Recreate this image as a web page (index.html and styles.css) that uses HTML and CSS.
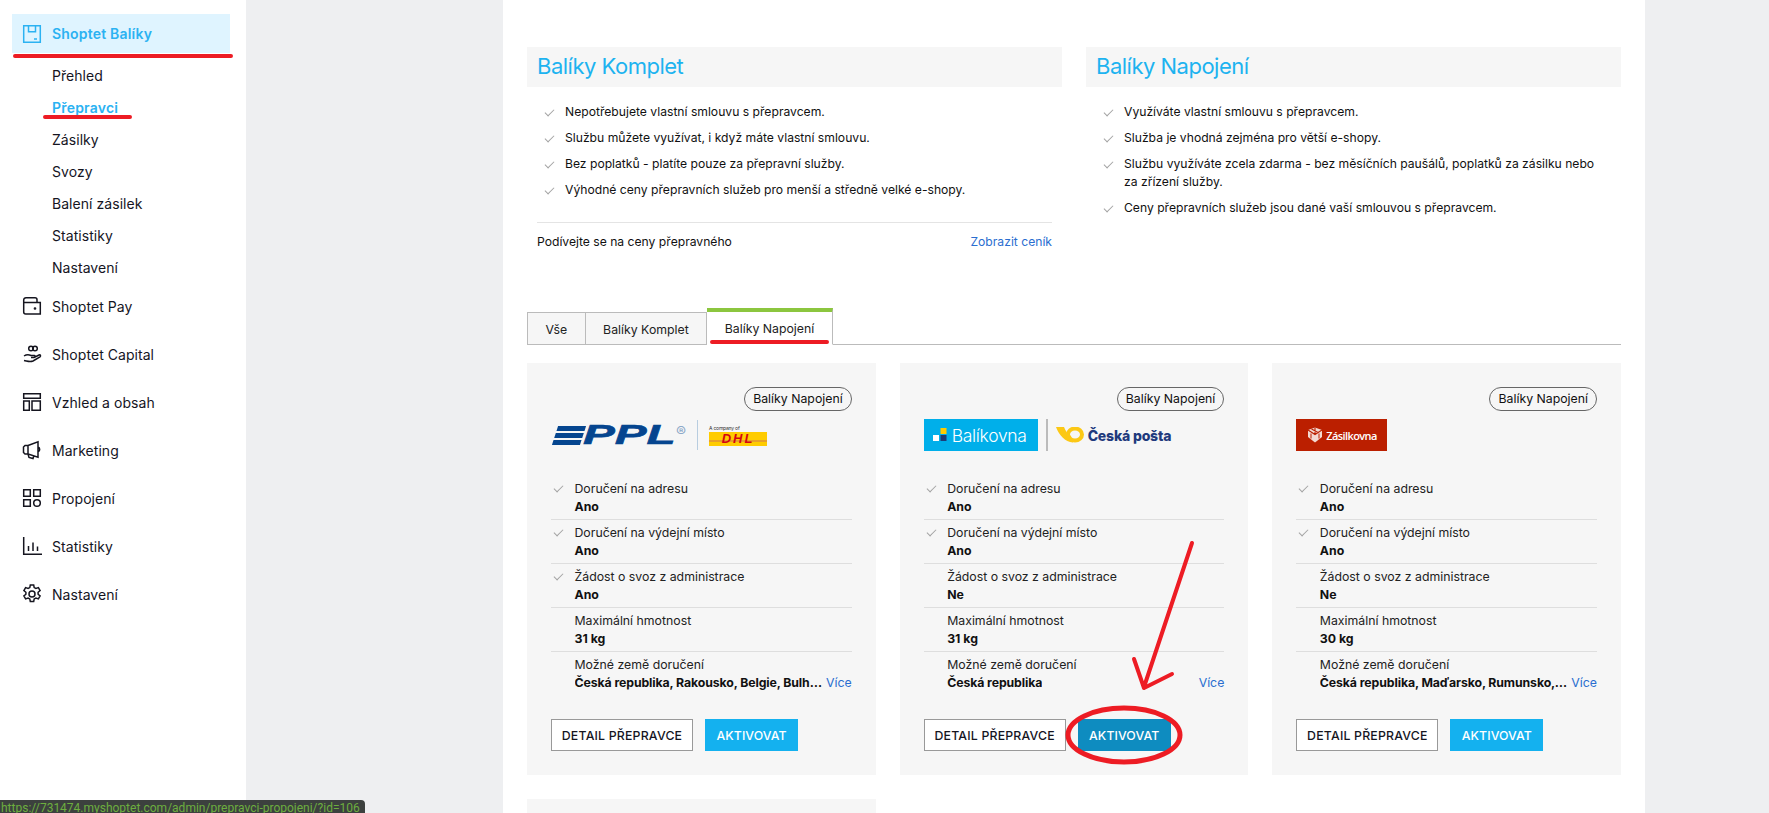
FILE: index.html
```html
<!DOCTYPE html>
<html>
  <head>
    <meta charset="utf-8" />
    <link rel="stylesheet" href="styles.css">
  </head>
  <body>
    <div class="page">
      <aside class="sidebar">
        <div class="nav-active">
          <svg class="nav-icon" viewBox="0 0 18 18"><path d="M.7.7h16.6v16.6H.7zM5.5.7v6h7v-6M11 14h3"/></svg>
          <span>Shoptet Balíky</span>
        </div>
        <ul class="subnav">
          <li>Přehled</li>
          <li class="current">Přepravci</li>
          <li>Zásilky</li>
          <li>Svozy</li>
          <li>Balení zásilek</li>
          <li>Statistiky</li>
          <li>Nastavení</li>
        </ul>
        <ul class="nav">
          <li>
            <svg class="nav-icon" viewBox="0 0 18 18"><path d="M.7 5.500v9.500a2 2 0 0 0 2 2h14.600V5.500zM.7 5.500V3a2.300 2.300 0 0 1 2.300-2.300h9a2 2 0 0 1 2 2v2.800"/><circle cx="12" cy="11.500" r=".6"/></svg>
            <span>Shoptet Pay</span>
          </li>
          <li>
            <svg class="nav-icon" viewBox="0 0 18 18"><circle cx="8" cy="3.500" r="2.300"/><circle cx="12" cy="3.500" r="2.300"/><path d="M1 11c3-2 5-1.500 7-.5h3.500c1 0 1 2-.5 2H8M11 12.500l5-2.500c1.500-.5 2 1 1 1.800L10 16c-3 1.300-5 .3-9-.5"/></svg>
            <span>Shoptet Capital</span>
          </li>
          <li>
            <svg class="nav-icon" viewBox="0 0 18 18"><path d="M.7.7h16.600v4.600H.7zM.7 8h5.600v9.300H.7zM9 8h8.300v9.300H9z"/></svg>
            <span>Vzhled a obsah</span>
          </li>
          <li>
            <svg class="nav-icon" viewBox="0 0 18 18"><path d="M5 4.500 15 .8v15.500L5 13zM5 4.500H2L.5 6v5.500L2 13h3M15 6c2 .5 2.500 4 0 5M5 13l1 3.500 4 1 1-3"/></svg>
            <span>Marketing</span>
          </li>
          <li>
            <svg class="nav-icon" viewBox="0 0 18 18"><path d="M.7.7h6.600v6.600H.7zM10.700.7h6.600v6.600h-6.600zM.7 10.700h6.600v6.600H.7z"/><circle cx="14" cy="14" r="3.300"/></svg>
            <span>Propojení</span>
          </li>
          <li>
            <svg class="nav-icon" viewBox="0 0 18 18"><path d="M.7 0v17.300H19M5.500 9v5M10 5.500V14M14.500 9.500V14"/></svg>
            <span>Statistiky</span>
          </li>
          <li>
            <svg class="nav-icon" viewBox="1 1 18 18"><path d="M8.300 1h3.400l.5 2.600 1.700.9 2.500-.9 1.700 3-2 1.700v1.900l2 1.700-1.700 3-2.500-.9-1.700.9-.5 2.600H8.300l-.5-2.600-1.700-.9-2.500.9-1.700-3 2-1.700V8.300l-2-1.700 1.700-3 2.500.9 1.700-.9z"/><circle cx="10" cy="10" r="3"/></svg>
            <span>Nastavení</span>
          </li>
        </ul>
      </aside>

      <main class="panel">
        <div class="intro">
          <section class="intro-col">
            <h2>Balíky Komplet</h2>
            <ul class="checks">
              <li>Nepotřebujete vlastní smlouvu s přepravcem.</li>
              <li>Službu můžete využívat, i když máte vlastní smlouvu.</li>
              <li>Bez poplatků - platíte pouze za přepravní služby.</li>
              <li>Výhodné ceny přepravních služeb pro menší a středně velké e-shopy.</li>
            </ul>
            <div class="pricing">
              <span>Podívejte se na ceny přepravného</span>
              <a>Zobrazit ceník</a>
            </div>
          </section>
          <section class="intro-col">
            <h2>Balíky Napojení</h2>
            <ul class="checks">
              <li>Využíváte vlastní smlouvu s přepravcem.</li>
              <li>Služba je vhodná zejména pro větší e-shopy.</li>
              <li>Službu využíváte zcela zdarma - bez měsíčních paušálů, poplatků za zásilku nebo za zřízení služby.</li>
              <li>Ceny přepravních služeb jsou dané vaší smlouvou s přepravcem.</li>
            </ul>
          </section>
        </div>

        <div class="tabs">
          <div class="tab">Vše</div>
          <div class="tab">Balíky Komplet</div>
          <div class="tab tab-active">Balíky Napojení</div>
        </div>

        <div class="cards">
          <article class="card">
            <div class="pill-row"><span class="pill">Balíky Napojení</span></div>
            <div class="logo-row">
              <div class="ppl">
                <span class="ppl-bars"><i></i><i></i><i></i></span>
                <span class="ppl-name">PPL</span>
                <span class="ppl-reg">®</span>
              </div>
              <span class="ppl-sep"></span>
              <div class="dhl">
                <span class="dhl-note">A company of</span>
                <span class="dhl-box">DHL</span>
              </div>
            </div>
            <div class="row row-check"><div>Doručení na adresu</div><b>Ano</b></div>
            <div class="row row-check"><div>Doručení na výdejní místo</div><b>Ano</b></div>
            <div class="row row-check"><div>Žádost o svoz z administrace</div><b>Ano</b></div>
            <div class="row"><div>Maximální hmotnost</div><b>31 kg</b></div>
            <div class="row row-last">
              <div>Možné země doručení</div>
              <div class="countries"><b>Česká republika, Rakousko, Belgie, Bulharsko, Dánsko</b><a>Více</a></div>
            </div>
            <div class="actions">
              <button class="btn btn-outline">DETAIL PŘEPRAVCE</button>
              <button class="btn btn-primary">AKTIVOVAT</button>
            </div>
          </article>

          <article class="card">
            <div class="pill-row"><span class="pill">Balíky Napojení</span></div>
            <div class="logo-row">
              <div class="balikovna">
                <svg class="balikovna-mark" viewBox="0 0 14 14"><rect x="7.500" y="0" width="6" height="6" fill="#ffcc00"/><rect x="7.500" y="7" width="6" height="6" fill="#1d3c78"/><rect x="0" y="7" width="6" height="6" fill="#fff"/></svg>
                <span>Balíkovna</span>
              </div>
              <span class="posta-sep"></span>
              <svg class="posta-horn" viewBox="0 0 28 16"><path d="M0 0h8c1.500 4 3.500 7 7 9l2 6.500C9 15 3 8 0 0z" fill="#fcc815"/><ellipse cx="19" cy="7.500" rx="7" ry="6" fill="none" stroke="#fcc815" stroke-width="4"/></svg>
              <span class="posta-name">Česká pošta</span>
            </div>
            <div class="row row-check"><div>Doručení na adresu</div><b>Ano</b></div>
            <div class="row row-check"><div>Doručení na výdejní místo</div><b>Ano</b></div>
            <div class="row"><div>Žádost o svoz z administrace</div><b>Ne</b></div>
            <div class="row"><div>Maximální hmotnost</div><b>31 kg</b></div>
            <div class="row row-last">
              <div>Možné země doručení</div>
              <div class="countries"><b>Česká republika</b><a>Více</a></div>
            </div>
            <div class="actions">
              <button class="btn btn-outline">DETAIL PŘEPRAVCE</button>
              <button class="btn btn-primary btn-hover">AKTIVOVAT</button>
            </div>
          </article>

          <article class="card">
            <div class="pill-row"><span class="pill">Balíky Napojení</span></div>
            <div class="logo-row">
              <div class="zasilkovna">
                <svg class="zasilkovna-mark" viewBox="0 0 16 16"><path d="M8 .5 15 3v7l-7 5.500L1 10V3z" fill="#f3d9d2"/><path d="M8 .5v7M1 3l7 4.500L15 3M4.500 2 11 5.500" fill="none" stroke="#bb1f00" stroke-width="1.100"/><path d="M4 6.500v5M12 6.500v5" stroke="#bb1f00"/></svg>
                <span>Zásilkovna</span>
              </div>
            </div>
            <div class="row row-check"><div>Doručení na adresu</div><b>Ano</b></div>
            <div class="row row-check"><div>Doručení na výdejní místo</div><b>Ano</b></div>
            <div class="row"><div>Žádost o svoz z administrace</div><b>Ne</b></div>
            <div class="row"><div>Maximální hmotnost</div><b>30 kg</b></div>
            <div class="row row-last">
              <div>Možné země doručení</div>
              <div class="countries"><b>Česká republika, Maďarsko, Rumunsko, Slovensko</b><a>Více</a></div>
            </div>
            <div class="actions">
              <button class="btn btn-outline">DETAIL PŘEPRAVCE</button>
              <button class="btn btn-primary">AKTIVOVAT</button>
            </div>
          </article>

          <article class="card"></article>
        </div>
      </main>
    </div>

    <!-- red marks drawn over the screenshot -->
    <svg class="marks" viewBox="0 0 1769 813">
      <path d="M15 56 231 56M45 117 130 117M712 342 827 342"/>
      <path d="M1192 543 1144 687M1134 659 1144 688 1172 674"/>
      <ellipse cx="1124" cy="735" rx="56" ry="27" stroke-width="5"/>
    </svg>

    <div class="url-status">https://731474.myshoptet.com/admin/prepravci-propojeni/?id=106</div>
  </body>
</html>
```

FILE: styles.css
```css
* {
  box-sizing: border-box;
}

html,
body {
  margin: 0;
  height: 100%;
  overflow: hidden;
}

body {
  position: relative;
  font-family: Inter, "Noto Sans", sans-serif;
  font-size: 12.300px;
  color: #111;
  background: #eeeff1;
}

ul {
  list-style: none;
  margin: 0;
  padding: 0;
}

.page {
  display: flex;
  height: 813px;
  overflow: hidden;
}

/* sidebar */

.sidebar {
  flex: 0 0 246px;
  background: #fff;
  padding: 14px 16px 0 12px;
  font-size: 14px;
  letter-spacing: 0.05px;
  color: #15151f;
}

.nav-icon {
  flex: 0 0 18px;
  width: 18px;
  height: 18px;
  margin-right: 11px;
  fill: none;
  stroke: currentColor;
  stroke-width: 1.500;
  overflow: visible;
}

.nav-active {
  display: flex;
  align-items: center;
  height: 39px;
  padding-left: 11px;
  background: #dff4ff;
  color: #2bb2f2;
  font-weight: 600;
  letter-spacing: 0.2px;
}

.subnav {
  padding: 7px 0 0 40px;
}

.subnav li {
  height: 32px;
  line-height: 32px;
}

.subnav .current {
  color: #2bb2f2;
  font-weight: 600;
  letter-spacing: 0.2px;
}

.nav {
  display: flex;
  flex-direction: column;
  gap: 6px;
  padding-top: 1px;
}

.nav li {
  display: flex;
  align-items: center;
  height: 42px;
  padding-left: 11px;
}

/* main panel */

.panel {
  flex: 0 0 1142px;
  min-width: 0;
  margin-left: 257px;
  padding: 47px 24px 0;
  background: #fff;
}

.intro {
  display: grid;
  grid-template-columns: repeat(2, minmax(0, 1fr));
  gap: 24px;
  height: 261px;
  font-size: 12.150px;
}

.intro-col h2 {
  margin: 0;
  height: 40px;
  padding-left: 10px;
  background: #f6f6f6;
  color: #1db3f0;
  font-size: 22px;
  font-weight: 400;
  line-height: 38px;
  letter-spacing: -0.5px;
}

.checks {
  padding: 16px 10px 0 38px;
}

.checks li {
  position: relative;
  margin-bottom: 8px;
  line-height: 18px;
}

.checks li::before,
.row-check::before {
  content: "";
  position: absolute;
  left: -18px;
  top: 4px;
  width: 4px;
  height: 8px;
  border: solid #a3a3a3;
  border-width: 0 1.200px 1.200px 0;
  transform: rotate(45deg);
}

.pricing {
  display: flex;
  justify-content: space-between;
  margin: 23px 10px 0 10px;
  padding-top: 10px;
  border-top: 1px solid #e4e4e4;
  line-height: 18px;
}

.pricing a,
.countries a {
  color: #2a6ed0;
}

/* tabs */

.tabs {
  display: flex;
  align-items: flex-end;
  height: 37px;
  border-bottom: 1px solid #bbb;
}

.tab {
  height: 33px;
  margin-bottom: -1px;
  padding: 0 17.500px;
  border: 1px solid #bbb;
  border-left-width: 0;
  background: #f6f6f6;
  color: #222;
  line-height: 33px;
}

.tab:first-child {
  border-left-width: 1px;
}

.tab-active {
  height: 37px;
  border-top: 4px solid #8cc63f;
  border-bottom-color: #fff;
  background: #fff;
}

/* carrier cards */

.cards {
  display: grid;
  grid-template-columns: repeat(3, minmax(0, 1fr));
  gap: 24px;
  padding-top: 18px;
}

.card {
  height: 412px;
  padding: 24px;
  background: #f6f6f6;
}

.pill-row {
  display: flex;
  justify-content: flex-end;
}

.pill {
  height: 24px;
  padding: 0 8px;
  border: 1px solid #666;
  border-radius: 12px;
  line-height: 22px;
  white-space: nowrap;
}

.logo-row {
  display: flex;
  align-items: center;
  height: 32px;
  margin: 8px 0 25px;
}

.row {
  position: relative;
  padding: 4px 0 3px 23.500px;
  border-bottom: 1px solid #dedede;
  line-height: 18px;
  color: #222;
}

.row b {
  color: #111;
}

.row-last {
  border-bottom: 0;
}

.row-check::before {
  left: 5px;
  top: 7px;
}

.countries {
  display: flex;
  justify-content: space-between;
  gap: 3px;
}

.countries b {
  overflow: hidden;
  white-space: nowrap;
  text-overflow: ellipsis;
  letter-spacing: -0.1px;
}

.actions {
  display: flex;
  gap: 12px;
  margin-top: 24px;
}

.btn {
  height: 32px;
  padding: 0;
  border: 0;
  font-family: inherit;
  font-size: 12.300px;
  font-weight: 500;
  letter-spacing: 0.2px;
}

.btn-outline {
  width: 142px;
  border: 1px solid #999;
  background: #fff;
  color: #15151f;
}

.btn-primary {
  width: 93px;
  background: #14b1ef;
  color: #fff;
  letter-spacing: 0.1px;
}

.btn-hover {
  background: #0e8cc0;
}

/* logos */

.ppl {
  display: flex;
  align-items: center;
  flex: 0 0 138px;
  margin-left: 1px;
  padding-left: 3px;
  color: #05458f;
}

.ppl-bars {
  display: flex;
  flex: 0 0 28px;
  flex-direction: column;
  gap: 2px;
  transform: skewX(-18deg);
}

.ppl-bars i {
  display: block;
  height: 5px;
  background: #05458f;
}

.ppl-name {
  flex: 0 0 93px;
  font-family: "Liberation Sans", sans-serif;
  font-size: 28px;
  font-style: italic;
  font-weight: 700;
  line-height: 24px;
  transform: scaleX(1.700);
  transform-origin: left center;
  -webkit-text-stroke: 0.6px #05458f;
}

.ppl-reg {
  align-self: flex-start;
  margin-top: 2px;
  color: #8ea9c9;
  font-size: 15px;
  line-height: 14px;
}

.ppl-sep {
  flex: 0 0 1px;
  height: 30px;
  margin: 0 11px 0 7px;
  background: #b8cde0;
}

.dhl {
  display: flex;
  flex-direction: column;
}

.dhl-note {
  font-size: 5px;
  line-height: 8px;
  letter-spacing: -0.2px;
  color: #333;
}

.dhl-box {
  width: 58px;
  height: 14px;
  background: linear-gradient(#ffcc00 0 8px, #e8a02a 8px 10px, #ffcc00 10px);
  color: #d40511;
  font-family: "Liberation Sans", sans-serif;
  font-size: 13px;
  font-style: italic;
  font-weight: 700;
  line-height: 14px;
  text-align: center;
  letter-spacing: 2px;
}

.balikovna {
  display: flex;
  align-items: center;
  flex: 0 0 114px;
  height: 32px;
  padding-left: 9px;
  background: #00afea;
  color: #fff;
  font-size: 17.500px;
  font-weight: 300;
  letter-spacing: -0.3px;
}

.balikovna-mark {
  width: 14px;
  height: 14px;
  margin-right: 5px;
}

.posta-sep {
  flex: 0 0 2px;
  height: 32px;
  margin: 0 8px 0 8px;
  background: #bbb;
}

.posta-horn {
  flex: 0 0 28px;
  height: 16px;
  margin-right: 4px;
}

.posta-name {
  color: #1f3a7d;
  font-size: 14px;
  font-weight: 800;
  letter-spacing: -0.2px;
  white-space: nowrap;
}

.zasilkovna {
  display: flex;
  align-items: center;
  flex: 0 0 91px;
  height: 32px;
  padding-left: 11px;
  background: #bb1f00;
  color: #fff;
  font-family: "Open Sans", sans-serif;
  font-size: 11px;
  font-weight: 600;
  letter-spacing: -0.6px;
}

.zasilkovna-mark {
  width: 16px;
  height: 16px;
  margin-right: 3px;
}

/* overlays */

.marks {
  position: absolute;
  top: 0;
  left: 0;
  width: 1769px;
  height: 813px;
  fill: none;
  stroke: #ed1c24;
  stroke-width: 4;
  stroke-linecap: round;
  stroke-linejoin: round;
  pointer-events: none;
}

.url-status {
  position: absolute;
  left: 0;
  bottom: 0;
  width: 365px;
  height: 13px;
  padding-left: 1px;
  border-top-right-radius: 4px;
  background: #3c403e;
  color: #6cae3e;
  font-family: Roboto, sans-serif;
  font-size: 12px;
  line-height: 17px;
  white-space: nowrap;
  overflow: hidden;
}
```
